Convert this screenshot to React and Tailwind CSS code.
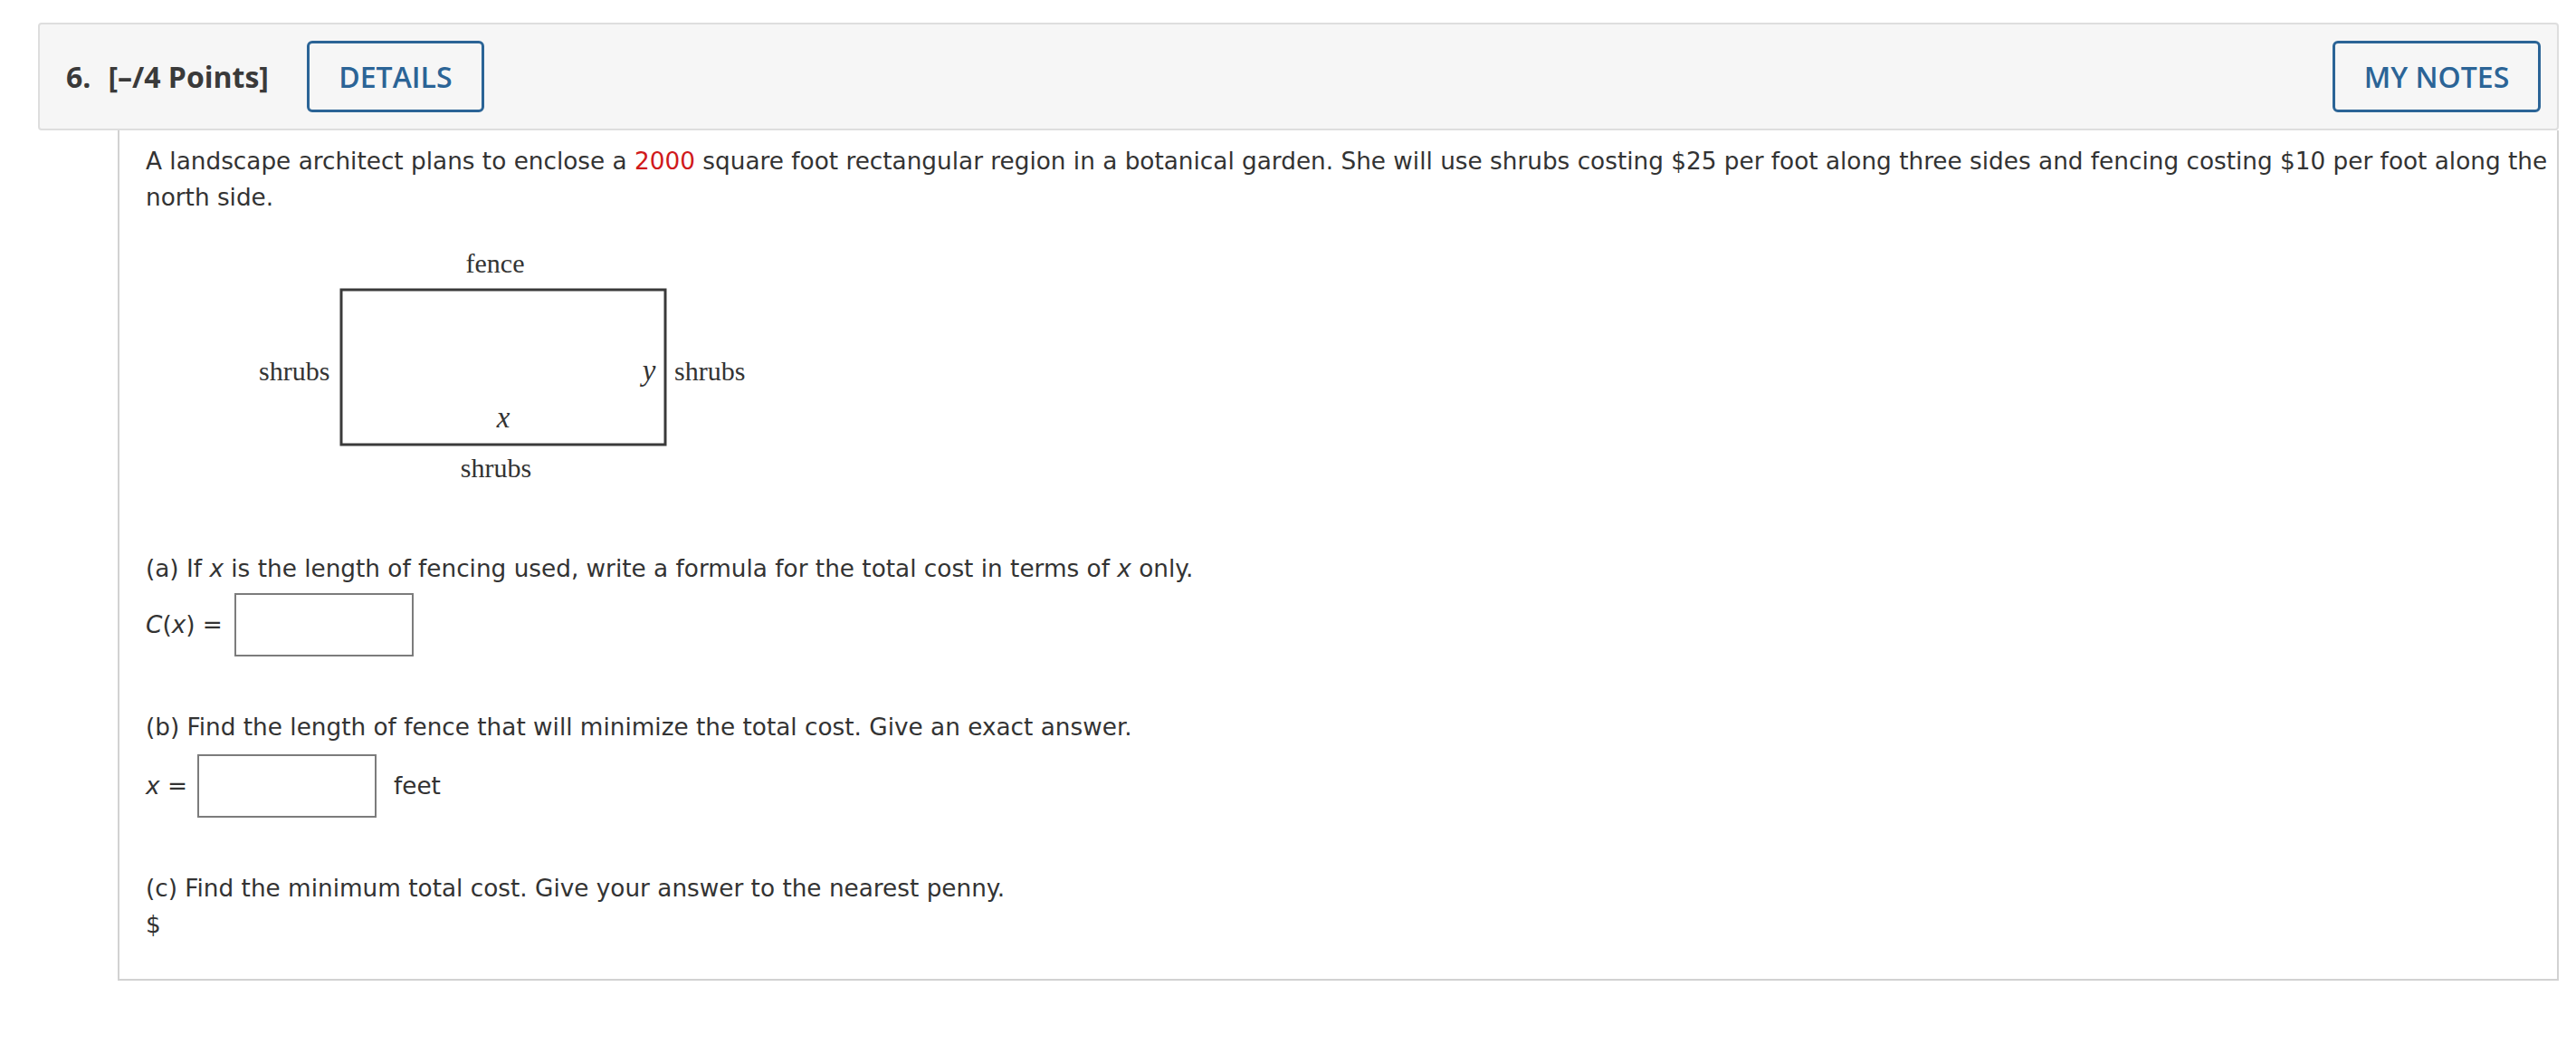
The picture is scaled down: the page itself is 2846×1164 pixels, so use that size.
import React from "react";

const body = { fontFamily: '"DejaVu Sans", Verdana, sans-serif' };
const head = { fontFamily: '"Open Sans", "Noto Sans", sans-serif' };

function Diagram() {
  return (
    <svg width="580" height="280" viewBox="0 0 580 280" className="block ml-[110px] mt-[27px]">
      <rect x="106" y="55" width="358" height="171" fill="none" stroke="#3a3a3a" strokeWidth="3" />
      <g fontFamily='"Liberation Serif", "Times New Roman", serif' fontSize="30" fill="#333">
        <text x="276" y="36" textAnchor="middle">fence</text>
        <text x="15" y="155">shrubs</text>
        <text x="474" y="155">shrubs</text>
        <text x="277" y="262" textAnchor="middle">shrubs</text>
        <text x="446" y="155" textAnchor="middle" fontStyle="italic" fontSize="33">y</text>
        <text x="285" y="207" textAnchor="middle" fontStyle="italic" fontSize="33">x</text>
      </g>
    </svg>
  );
}

function Box() {
  return <div className="w-[198px] h-[70px] border-2 border-[#7c7c7c] bg-white" />;
}

export default function App() {
  return (
    <div className="w-[2846px] h-[1164px] bg-white pt-[25px] pl-[42px] pr-[19px] text-[#333]">
      <div
        className="h-[119px] bg-[#f6f6f6] border-2 border-[#dedede] rounded-[4px] flex items-center justify-between pl-[29px] pr-[18px]"
        style={head}
      >
        <div className="flex items-center">
          <span className="text-[32px] font-bold text-[#3a3a3a]">6.</span>
          <span className="text-[32px] font-bold text-[#3a3a3a] ml-[19px]">[–/4 Points]</span>
          <button className="ml-[42px] w-[196px] h-[79px] border-[3px] border-[#2b6496] rounded-[6px] text-[32px] font-semibold text-[#2b6496] flex items-center justify-center">
            DETAILS
          </button>
        </div>
        <button className="w-[230px] h-[79px] border-[3px] border-[#2b6496] rounded-[6px] text-[32px] font-semibold text-[#2b6496] flex items-center justify-center">
          MY NOTES
        </button>
      </div>
      <div
        className="ml-[88px] border-x-2 border-b-2 border-[#d2d2d2] pl-[29px] pr-[6px] pt-[14px] pb-[40px] text-[26.3px] leading-[40px]"
        style={body}
      >
        <p>
          A landscape architect plans to enclose a <span className="text-[#d0191b]">2000</span> square foot rectangular
          region in a botanical garden. She will use shrubs costing $25 per foot along three sides and fencing costing
          $10 per foot along the north side.
        </p>
        <Diagram />
        <p className="mt-[63px]">
          (a) If <i>x</i> is the length of fencing used, write a formula for the total cost in terms of <i>x</i> only.
        </p>
        <div className="mt-[7px] flex items-center">
          <span>
            <i>C</i>(<i>x</i>) =
          </span>
          <div className="ml-[13px]">
            <Box />
          </div>
        </div>
        <p className="mt-[58px]">(b) Find the length of fence that will minimize the total cost. Give an exact answer.</p>
        <div className="mt-[10px] flex items-center">
          <span>
            <i>x</i> =
          </span>
          <div className="ml-[11px]">
            <Box />
          </div>
          <span className="ml-[19px]">feet</span>
        </div>
        <p className="mt-[58px]">(c) Find the minimum total cost. Give your answer to the nearest penny.</p>
        <p>$</p>
      </div>
    </div>
  );
}
